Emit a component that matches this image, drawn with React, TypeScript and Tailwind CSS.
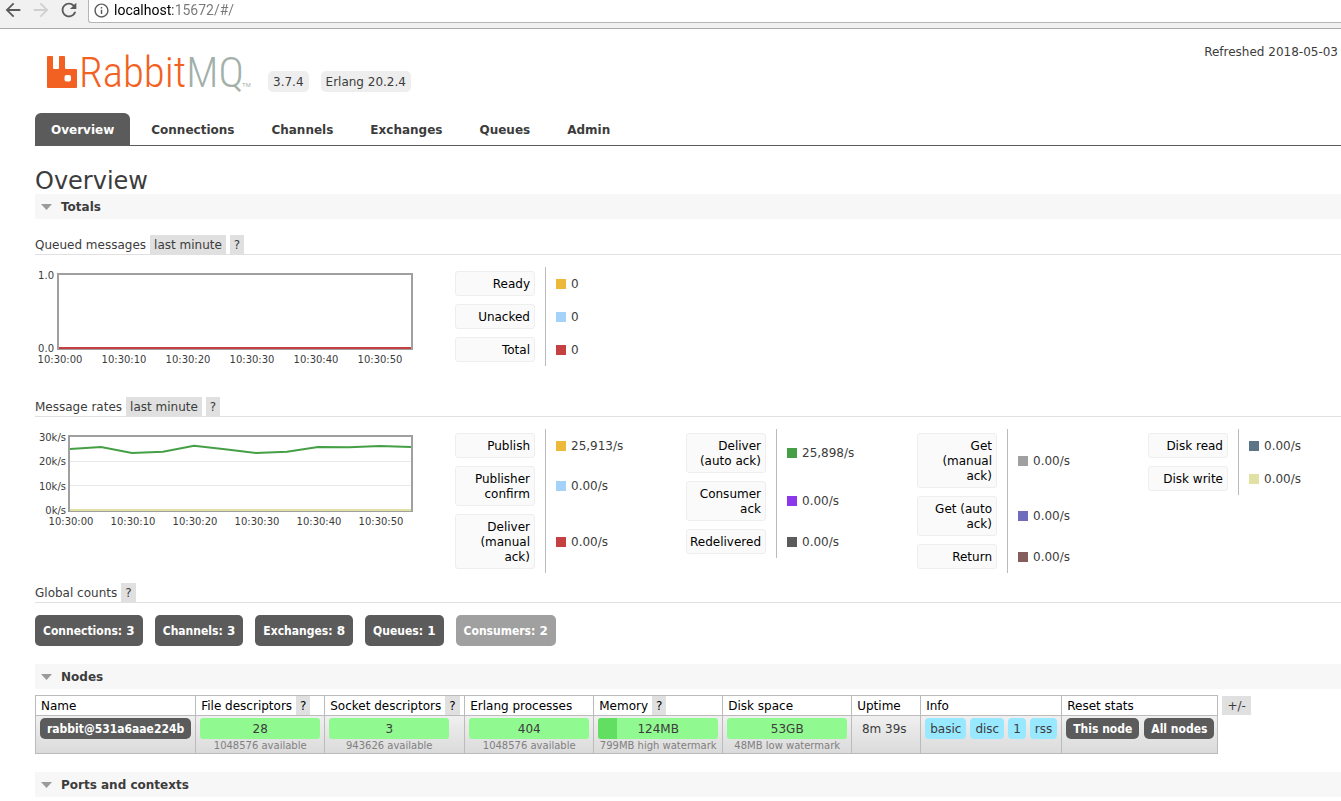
import React from 'react';
import { MdArrowBack, MdArrowForward, MdInfoOutline, MdRefresh } from 'react-icons/md';

type Rate = { label: string; color: string; value: string };

const tabs = ['Overview', 'Connections', 'Channels', 'Exchanges', 'Queues', 'Admin'];

const queued: Rate[][] = [
  [
    { label: 'Ready', color: 'bg-[#edb93b]', value: '0' },
    { label: 'Unacked', color: 'bg-[#a5d2f8]', value: '0' },
    { label: 'Total', color: 'bg-[#c54141]', value: '0' },
  ],
];

const rates: Rate[][] = [
  [
    { label: 'Publish', color: 'bg-[#edb93b]', value: '25,913/s' },
    { label: 'Publisher confirm', color: 'bg-[#a5d2f8]', value: '0.00/s' },
    { label: 'Deliver (manual ack)', color: 'bg-[#c54141]', value: '0.00/s' },
  ],
  [
    { label: 'Deliver (auto ack)', color: 'bg-[#459f45]', value: '25,898/s' },
    { label: 'Consumer ack', color: 'bg-[#8b38ea]', value: '0.00/s' },
    { label: 'Redelivered', color: 'bg-[#5b5b5b]', value: '0.00/s' },
  ],
  [
    { label: 'Get (manual ack)', color: 'bg-[#a0a0a0]', value: '0.00/s' },
    { label: 'Get (auto ack)', color: 'bg-[#706cbc]', value: '0.00/s' },
    { label: 'Return', color: 'bg-[#865d5d]', value: '0.00/s' },
  ],
  [
    { label: 'Disk read', color: 'bg-[#5d7686]', value: '0.00/s' },
    { label: 'Disk write', color: 'bg-[#e1e1a4]', value: '0.00/s' },
  ],
];

const counts = [
  { label: 'Connections', n: 3 },
  { label: 'Channels', n: 3 },
  { label: 'Exchanges', n: 8 },
  { label: 'Queues', n: 1 },
  { label: 'Consumers', n: 2, disabled: true },
];

const times = ['10:30:00', '10:30:10', '10:30:20', '10:30:30', '10:30:40', '10:30:50'];

function BrowserBar() {
  return (
    <div className="flex h-[29px] items-start border-b border-[#a9a9a9] bg-[#f1f1f1] pl-[2px]">
      <div className="flex h-5 items-center gap-[6px] text-[#5a5a5a]">
        <button aria-label="Back"><MdArrowBack size={22} /></button>
        <button aria-label="Forward" className="text-[#d0d0d0]" disabled><MdArrowForward size={22} /></button>
        <button aria-label="Reload"><MdRefresh size={22} /></button>
      </div>
      <div className="ml-2 flex h-[23px] flex-1 items-center rounded-bl-[3px] border-b border-l border-[#b5b5b5] bg-white pb-[2px] pl-1">
        <MdInfoOutline size={17} className="shrink-0 text-[#5a5a5a]" />
        <input
          aria-label="Address"
          readOnly
          value="localhost:15672/#/"
          className="ml-1 h-5 flex-1 bg-[linear-gradient(to_right,#000_59px,#777_59px)] bg-clip-text font-[Roboto,sans-serif] text-[14px] text-transparent outline-none"
        />
      </div>
    </div>
  );
}

function Logo() {
  return (
    <svg width="210" height="40" className="overflow-visible" role="img" aria-label="RabbitMQ">
      <path
        fill="#f26122"
        fillRule="evenodd"
        d="M2 4h4q1 0 1 1v11q0 1 1 1h4q1 0 1-1V5q0-1 1-1h4q1 0 1 1v11q0 1 1 1h10q1 0 1 1v17q0 1-1 1H2q-1 0-1-1V5q0-1 1-1zM20.500 23q-2 0-2 2v2.500q0 2 2 2h2.500q2 0 2-2V25q0-2-2-2z"
      />
      <text
        x="33"
        y="35"
        fontSize="43"
        fontWeight="300"
        fontFamily="'Roboto Condensed Light', 'Roboto Condensed', 'Open Sans Condensed Light', sans-serif"
        fill="#f26122"
      >
        Rabbit<tspan fill="#a2b0a9">MQ</tspan>
      </text>
      <text x="196" y="35" fontSize="6" fontFamily="'Liberation Sans', sans-serif" fill="#a2b0a9">TM</text>
    </svg>
  );
}

function Help() {
  return <button className="h-[19px] bg-[#e0e0e0] px-1">?</button>;
}

function SectionBar({ title }: { title: string }) {
  return (
    <h2 className="bg-[#f7f7f7] font-bold">
      <button className="flex h-[25px] w-full items-center gap-[9px] pl-[6px]">
        <svg width="11" height="6"><path d="M0 0h11L5.500 6z" fill="#9b9b9b" /></svg>
        <span>{title}</span>
      </button>
    </h2>
  );
}

function SubHeading({ title, range }: { title: string; range?: string }) {
  return (
    <h3 className="flex h-5 items-center gap-1 border-b border-[#e0e0e0]">
      <span>{title}</span>
      {range && <button className="h-[19px] bg-[#e0e0e0] px-1">{range}</button>}
      <Help />
    </h3>
  );
}

function TimeLabels({ start, step }: { start: number; step: number }) {
  return (
    <g textAnchor="middle">
      {times.map((t, i) => (
        <text key={t} x={start + i * step} y="96">{t}</text>
      ))}
    </g>
  );
}

function QueuedChart() {
  return (
    <svg width="420" height="120" className="shrink-0" fontSize="10" fill="#3c3c3c">
      <g textAnchor="end">
        <text x="19" y="12">1.0</text>
        <text x="19" y="85">0.0</text>
      </g>
      <rect x="23" y="7" width="354" height="75" fill="none" stroke="#a0a0a0" strokeWidth="2" />
      <path d="M24 81h352" stroke="#c54141" strokeWidth="2" />
      <TimeLabels start={25} step={64} />
    </svg>
  );
}

function RatesChart() {
  return (
    <svg width="420" height="120" className="shrink-0" fontSize="10" fill="#3c3c3c">
      <g textAnchor="end">
        <text x="31" y="12">30k/s</text>
        <text x="31" y="36">20k/s</text>
        <text x="31" y="61">10k/s</text>
        <text x="31" y="85">0k/s</text>
      </g>
      <path d="M35 32.500h341M35 56.500h341" stroke="#e8e8e8" />
      <rect x="34" y="7" width="343" height="75" fill="none" stroke="#a0a0a0" strokeWidth="2" />
      <path d="M35 81h341" stroke="#e1e1a4" strokeWidth="2" />
      <polyline
        points="35,20 66,18 97,24 128,22.7 159,16.7 190,20.3 221,24 252,22.7 283,18 314,18.3 345,17 376,18"
        fill="none"
        stroke="#459f45"
        strokeWidth="2"
      />
      <TimeLabels start={36} step={62} />
    </svg>
  );
}

function Legend({ columns }: { columns: Rate[][] }) {
  return (
    <div className="flex items-start">
      {columns.map((rows, i) => (
        <div key={i} className="w-[231px] shrink-0">
          <table>
            <tbody>
              {rows.map((r) => (
                <tr key={r.label}>
                  <th className="py-1 pr-[10px] pl-0 font-normal text-black">
                    <button className="block w-20 rounded-[3px] border border-[#eee] bg-[#fafafa] pt-[5px] pr-[4px] pb-[3px] pl-[3px] text-right leading-[15px]">
                      {r.label}
                    </button>
                  </th>
                  <td className="border-l border-[#bbb] pl-[10px]">
                    <div className="flex items-center gap-[5px]">
                      <span className={`h-[10px] w-[10px] ${r.color}`} />
                      <span>{r.value}</span>
                    </div>
                  </td>
                </tr>
              ))}
            </tbody>
          </table>
        </div>
      ))}
    </div>
  );
}

function Bar({ value, note, used = 0 }: { value: string; note: string; used?: number }) {
  return (
    <td className="border border-[#bbb] px-1 pt-[2px] align-top">
      <div className="relative h-[21px] w-[120px] overflow-hidden rounded-[3px] bg-[#90f990] text-center leading-[22px]">
        <div className="absolute inset-y-0 left-0 bg-[#62de62]" style={{ width: `${used}%` }} />
        <span className="relative">{value}</span>
      </div>
      <div className="w-[120px] text-center text-[10px] leading-[13px] whitespace-nowrap text-[#808080]">{note}</div>
    </td>
  );
}

function Th({ children, help }: { children: React.ReactNode; help?: boolean }) {
  return (
    <th className="border border-[#bbb] p-0 pl-[5px] text-left font-normal whitespace-nowrap text-black">
      <div className="flex h-[19px] items-center gap-1">
        <span>{children}</span>
        {help && <Help />}
      </div>
    </th>
  );
}

function NodesTable() {
  const dark =
    "h-[21px] rounded-[5px] bg-[#5b5b5b] px-[7px] font-['DejaVu_Sans_Condensed','DejaVu_Sans',sans-serif] font-bold text-white";
  return (
    <div className="mt-[6px] flex items-start gap-1">
      <table className="border-collapse">
        <colgroup>
          <col className="w-[160px]" />
          <col className="w-[129px]" />
          <col className="w-[140px]" />
          <col className="w-[129px]" />
          <col className="w-[129px]" />
          <col className="w-[129px]" />
          <col className="w-[69px]" />
          <col className="w-[141px]" />
          <col className="w-[156px]" />
        </colgroup>
        <thead>
          <tr>
            <Th>Name</Th>
            <Th help>File descriptors</Th>
            <Th help>Socket descriptors</Th>
            <Th>Erlang processes</Th>
            <Th help>Memory</Th>
            <Th>Disk space</Th>
            <Th>Uptime</Th>
            <Th>Info</Th>
            <Th>Reset stats</Th>
          </tr>
        </thead>
        <tbody>
          <tr className="h-[38px] bg-linear-to-b from-[#f0f0f0] to-[#dadada]">
            <td className="border border-[#bbb] px-1 pt-[2px] align-top">
              <a href="#/nodes/rabbit" className={`block w-fit leading-[22px] ${dark}`}>rabbit@531a6aae224b</a>
            </td>
            <Bar value="28" note="1048576 available" />
            <Bar value="3" note="943626 available" />
            <Bar value="404" note="1048576 available" />
            <Bar value="124MB" note="799MB high watermark" used={16} />
            <Bar value="53GB" note="48MB low watermark" />
            <td className="border border-[#bbb] pt-[2px] pr-2 pl-1 text-center align-top leading-[22px] whitespace-nowrap">8m 39s</td>
            <td className="border border-[#bbb] pt-[2px] pr-[3px] pl-1 align-top">
              <div className="flex h-[21px] gap-1 leading-[22px]">
                {['basic', 'disc', '1', 'rss'].map((t) => (
                  <abbr key={t} className="rounded-[4px] bg-[#98e8ff] px-[5px]">{t}</abbr>
                ))}
              </div>
            </td>
            <td className="border border-[#bbb] pt-[2px] pr-[3px] pl-1 align-top">
              <div className="flex gap-[5px] leading-[22px] whitespace-nowrap">
                <button className={dark}>This node</button>
                <button className={dark}>All nodes</button>
              </div>
            </td>
          </tr>
        </tbody>
      </table>
      <button className="mt-px h-[19px] bg-[#e0e0e0] px-[5px]">+/-</button>
    </div>
  );
}

export default function App() {
  return (
    <div className="min-h-screen overflow-hidden bg-white font-['DejaVu_Sans',Verdana,sans-serif] text-[12px] leading-4 text-[#3c3c3c]">
      <BrowserBar />
      <div className="pl-[35px]">
        <header className="flex items-end pt-[15px] pr-[3px] pl-[11px]">
          <Logo />
          <div className="ml-3 flex h-[21px] gap-3 leading-[22px]">
            <span className="rounded-[5px] bg-[#eee] px-[5px]">3.7.4</span>
            <span className="rounded-[5px] bg-[#eee] px-[5px]">Erlang 20.2.4</span>
          </div>
          <div className="mb-8 ml-auto">Refreshed 2018-05-03</div>
        </header>

        <nav className="mt-[21px] flex h-[33px] gap-[5px] border-b border-[#5b5b5b] font-bold leading-[34px]">
          {tabs.map((t, i) => (
            <a
              key={t}
              href={`#/${t.toLowerCase()}`}
              className={i === 0 ? 'rounded-t-[6px] bg-[#5b5b5b] px-4 text-white' : 'px-4'}
            >
              {t}
            </a>
          ))}
        </nav>

        <main>
          <h1 className="h-12 pt-5 text-[24px] leading-[30px]">Overview</h1>

          <SectionBar title="Totals" />
          <div className="mt-4">
            <SubHeading title="Queued messages" range="last minute" />
            <div className="mt-3 mb-[10px] flex">
              <QueuedChart />
              <Legend columns={queued} />
            </div>
            <SubHeading title="Message rates" range="last minute" />
            <div className="mt-3 mb-[10px] flex">
              <RatesChart />
              <Legend columns={rates} />
            </div>
            <SubHeading title="Global counts" />
            <div className="mt-3 mb-[18px] flex h-[31px] gap-3 font-bold leading-8 text-white">
              {counts.map((c) => (
                <a
                  key={c.label}
                  href={`#/${c.label.toLowerCase()}`}
                  className={`rounded-[5px] px-2 ${c.disabled ? 'bg-[#a0a0a0]' : 'bg-[#5b5b5b]'}`}
                >
                  <span className="font-['DejaVu_Sans_Condensed','DejaVu_Sans',sans-serif]">{c.label}:</span>{' '}
                  <strong>{c.n}</strong>
                </a>
              ))}
            </div>
          </div>

          <SectionBar title="Nodes" />
          <NodesTable />
          <div className="mt-[18px]">
            <SectionBar title="Ports and contexts" />
          </div>
        </main>
      </div>
    </div>
  );
}
